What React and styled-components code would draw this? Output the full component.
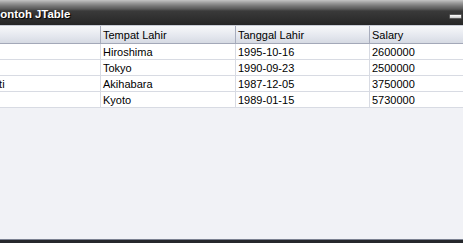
import styled, { createGlobalStyle } from 'styled-components'

const GlobalStyle = createGlobalStyle`
  html, body {
    margin: 0;
    padding: 0;
    background: #f1f2f6;
  }
  body {
    font-family: "Liberation Sans", Arial, sans-serif;
  }
`

const columns = [
  { key: 'nama', title: 'Nama', width: 195 },
  { key: 'tempat', title: 'Tempat Lahir', width: 135 },
  { key: 'tanggal', title: 'Tanggal Lahir', width: 134 },
  { key: 'salary', title: 'Salary', width: 134 },
]

const rows = [
  { nama: 'Sakura', tempat: 'Hiroshima', tanggal: '1995-10-16', salary: '2600000' },
  { nama: 'Naruto', tempat: 'Tokyo', tanggal: '1990-09-23', salary: '2500000' },
  { nama: 'Dewi Ratna Susanti', tempat: 'Akihabara', tanggal: '1987-12-05', salary: '3750000' },
  { nama: 'Hinata', tempat: 'Kyoto', tanggal: '1989-01-15', salary: '5730000' },
]

const template = columns.map((c) => `${c.width}px`).join(' ')

const App = () => (
  <Window>
    <GlobalStyle />
    <TitleBar>
      <Title>Contoh JTable</Title>
      <Minimize />
    </TitleBar>
    <Viewport>
      <Table>
        <HeaderRow>
          {columns.map((c) => (
            <HeaderCell key={c.key}>{c.title}</HeaderCell>
          ))}
        </HeaderRow>
        {rows.map((r, i) => (
          <Row key={i}>
            {columns.map((c) => (
              <Cell key={c.key}>{r[c.key]}</Cell>
            ))}
          </Row>
        ))}
      </Table>
    </Viewport>
    <BottomEdge />
  </Window>
)

const Window = styled.div`
  width: 463px;
  height: 243px;
  display: flex;
  flex-direction: column;
  overflow: hidden;
  background: #f1f2f6;
`

const TitleBar = styled.div`
  height: 25px;
  flex: none;
  display: flex;
  align-items: center;
  justify-content: space-between;
  background: linear-gradient(
    #c4c4c4 0px,
    #9a9a9a 3px,
    #767676 6px,
    #585858 9px,
    #3a3a3a 11px,
    #303030 18px,
    #262626 25px
  );
  overflow: hidden;
`

const Title = styled.div`
  margin-left: -8px;
  padding-top: 3px;
  font-family: "Liberation Sans", Arial, sans-serif;
  font-weight: bold;
  font-size: 11.4px;
  color: #ffffff;
  text-shadow: 1px 1px 1px #000;
  white-space: nowrap;
`

const Minimize = styled.div`
  width: 11px;
  height: 3px;
  margin: 8px 1px 0 0;
  background: linear-gradient(#ffffff, #c8c8c8);
  border: 1px solid #5a5a5a;
  border-radius: 1px;
`

const Viewport = styled.div`
  flex: 1;
  overflow: hidden;
  border-bottom: 1px solid #7c8292;
`

const Table = styled.div`
  margin-left: -95px;
  width: max-content;
  font-size: 11px;
  color: #000;
`

const HeaderRow = styled.div`
  display: grid;
  grid-template-columns: ${template};
  height: 17px;
  border-top: 1px solid #c8ccd6;
  border-bottom: 1px solid #a3a8b8;
  background: linear-gradient(#f7f8fa, #e4e7ee 60%, #d6dae3);
`

const HeaderCell = styled.div`
  display: flex;
  align-items: center;
  padding: 1px 0 0 2px;
  border-left: 1px solid #a8adbd;
  white-space: nowrap;
  overflow: hidden;
`

const Row = styled.div`
  display: grid;
  grid-template-columns: ${template};
  height: 15px;
  background: #ffffff;
  border-bottom: 1px solid #d8dbe3;
`

const Cell = styled.div`
  display: flex;
  align-items: center;
  padding: 1px 0 0 2px;
  border-left: 1px solid #d8dbe3;
  white-space: nowrap;
  overflow: hidden;
`

const BottomEdge = styled.div`
  height: 3px;
  flex: none;
  background: #26282c;
`

export default App
